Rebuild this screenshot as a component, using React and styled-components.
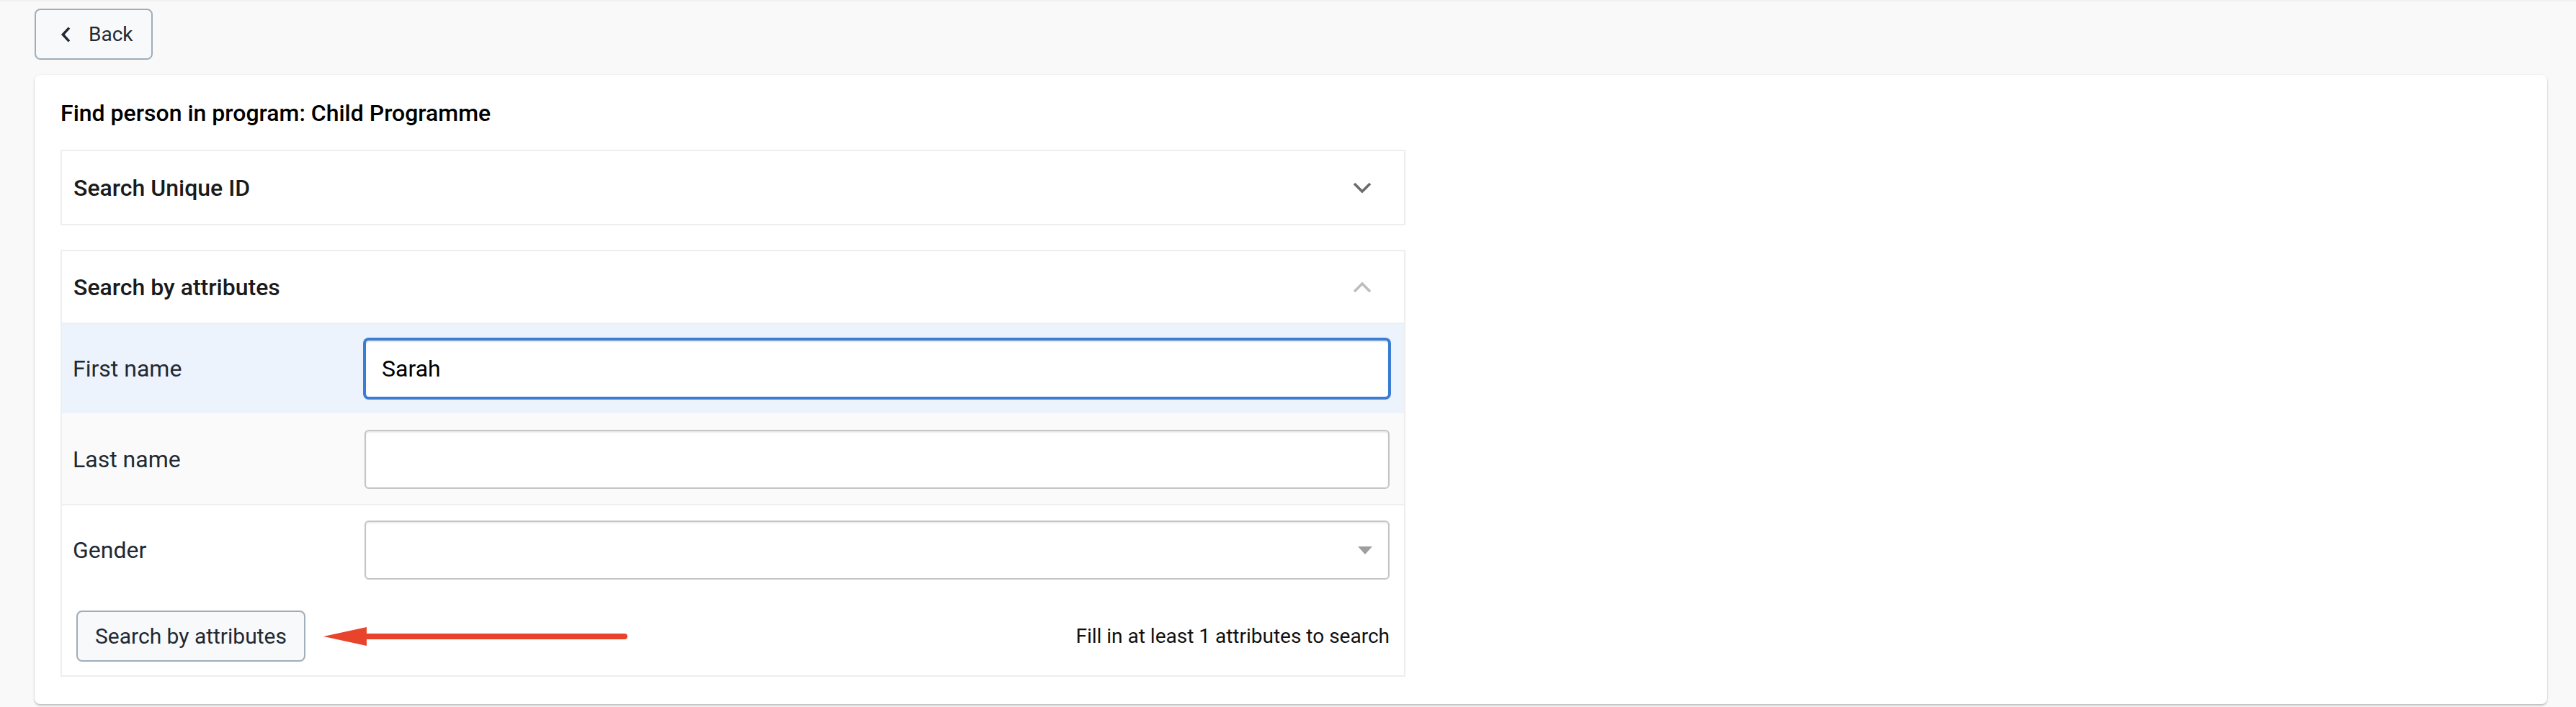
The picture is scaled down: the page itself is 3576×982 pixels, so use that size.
import React from "react";
import styled, { createGlobalStyle } from "styled-components";

const GlobalStyle = createGlobalStyle`
  html, body { margin: 0; padding: 0; }
  body {
    background: #f9f9f9;
    font-family: Roboto, "Noto Sans", "Liberation Sans", sans-serif;
    color: #212934;
    border-top: 2px solid #f1f1f1;
  }
  * { box-sizing: border-box; }
`;

const Page = styled.div`
  padding: 10px 40px 6px 48px;
  display: flex;
  flex-direction: column;
  align-items: flex-start;
`;

const OutlineButton = styled.button`
  display: inline-flex;
  align-items: center;
  gap: ${(p) => (p.$icon ? "15px" : "0")};
  height: 71px;
  padding: ${(p) => (p.$icon ? "0 25px 0 26px" : "0 24px")};
  border: 2px solid #a0adba;
  border-radius: 8px;
  background: #f8f9fa;
  color: #212934;
  font-family: Roboto, "Noto Sans", sans-serif;
  font-size: ${(p) => p.$size || 28}px;
  font-weight: 400;
  cursor: pointer;
  flex-shrink: 0;
`;

const Card = styled.div`
  align-self: stretch;
  margin-top: 21px;
  background: #fff;
  border-radius: 8px;
  box-shadow: 0 2px 3px rgba(0, 0, 0, 0.22), 0 0 2px rgba(0, 0, 0, 0.08);
  padding: 33px 36px 38px 36px;
`;

const Title = styled.h1`
  margin: 0 0 31px 0;
  font-size: 32px;
  line-height: 40px;
  font-weight: 500;
  color: #000;
`;

const Sections = styled.div`
  width: 1867px;
  display: flex;
  flex-direction: column;
  gap: 34px;
`;

const Section = styled.section`
  border: 2px solid #eeeeee;
  background: #fff;
`;

const SectionHeader = styled.div`
  height: ${(p) => p.$h}px;
  display: flex;
  align-items: center;
  justify-content: space-between;
  padding: 0 45px 0 16px;
  font-size: 32px;
  font-weight: 500;
  color: #1b1b1b;
`;

const Row = styled.div`
  display: grid;
  grid-template-columns: 420px 1fr;
  align-items: center;
  height: 126px;
  border-top: 2px solid #efefef;
  padding-right: 20px;
  background: ${(p) =>
    p.$tone === "focus" ? "#ecf3fc" : p.$tone === "muted" ? "#fafafa" : "#fff"};
  border-top-color: ${(p) => (p.$tone === "muted" ? "transparent" : "#efefef")};
`;

const Label = styled.label`
  padding-left: 15px;
  font-size: 32px;
  color: #212934;
`;

const Field = styled.div`
  height: 82px;
  display: flex;
  align-items: center;
  padding: 0 22px;
  background: #fff;
  border: 2px solid ${(p) => (p.$focused ? "#3b7dd3" : "#c4c4c4")};
  border-radius: 6px;
  box-shadow: ${(p) =>
    p.$focused
      ? "0 0 0 2px #3b7dd3, inset 0 2px 2px rgba(0,0,0,0.12)"
      : "inset 0 2px 2px rgba(0,0,0,0.08)"};
  font-size: 32px;
  color: #000;
`;

const Caret = styled.span`
  margin-left: auto;
  width: 0;
  height: 0;
  border-left: 10px solid transparent;
  border-right: 10px solid transparent;
  border-top: 11px solid #9e9e9e;
`;

const Actions = styled.div`
  display: flex;
  align-items: center;
  padding: 22px 20px 19px 20px;
`;

const Arrow = styled.svg`
  margin-left: 25px;
  flex-shrink: 0;
`;

const Help = styled.span`
  margin-left: auto;
  font-size: 28px;
  color: #111;
`;

const ChevronIcon = ({ up, color }) => (
  <svg width="26" height="16" viewBox="0 0 26 16">
    <polyline
      points={up ? "2,14 13,3 24,14" : "2,2 13,13 24,2"}
      fill="none"
      stroke={color}
      strokeWidth="3.6"
    />
  </svg>
);

export default function App() {
  return (
    <>
      <GlobalStyle />
      <Page>
        <OutlineButton $icon>
          <svg width="32" height="32" viewBox="0 0 24 24">
            <polyline
              points="15,5 8.5,12 15,19"
              fill="none"
              stroke="#212934"
              strokeWidth="2.6"
            />
          </svg>
          Back
        </OutlineButton>
        <Card>
          <Title>Find person in program: Child Programme</Title>
          <Sections>
            <Section>
              <SectionHeader $h={101}>
                Search Unique ID
                <ChevronIcon color="#6b6b6b" />
              </SectionHeader>
            </Section>
            <Section>
              <SectionHeader $h={99}>
                Search by attributes
                <ChevronIcon up color="#bdbdbd" />
              </SectionHeader>
              <Row $tone="focus">
                <Label>First name</Label>
                <Field $focused>Sarah</Field>
              </Row>
              <Row $tone="muted">
                <Label>Last name</Label>
                <Field />
              </Row>
              <Row>
                <Label>Gender</Label>
                <Field>
                  <Caret />
                </Field>
              </Row>
              <Actions>
                <OutlineButton $size={30}>Search by attributes</OutlineButton>
                <Arrow width="422" height="28" viewBox="0 0 422 28">
                  <polygon points="0,14 60,1 60,27" fill="#e8432b" />
                  <line
                    x1="58"
                    y1="14"
                    x2="418"
                    y2="14"
                    stroke="#e8432b"
                    strokeWidth="8"
                    strokeLinecap="round"
                  />
                </Arrow>
                <Help>Fill in at least 1 attributes to search</Help>
              </Actions>
            </Section>
          </Sections>
        </Card>
      </Page>
    </>
  );
}
